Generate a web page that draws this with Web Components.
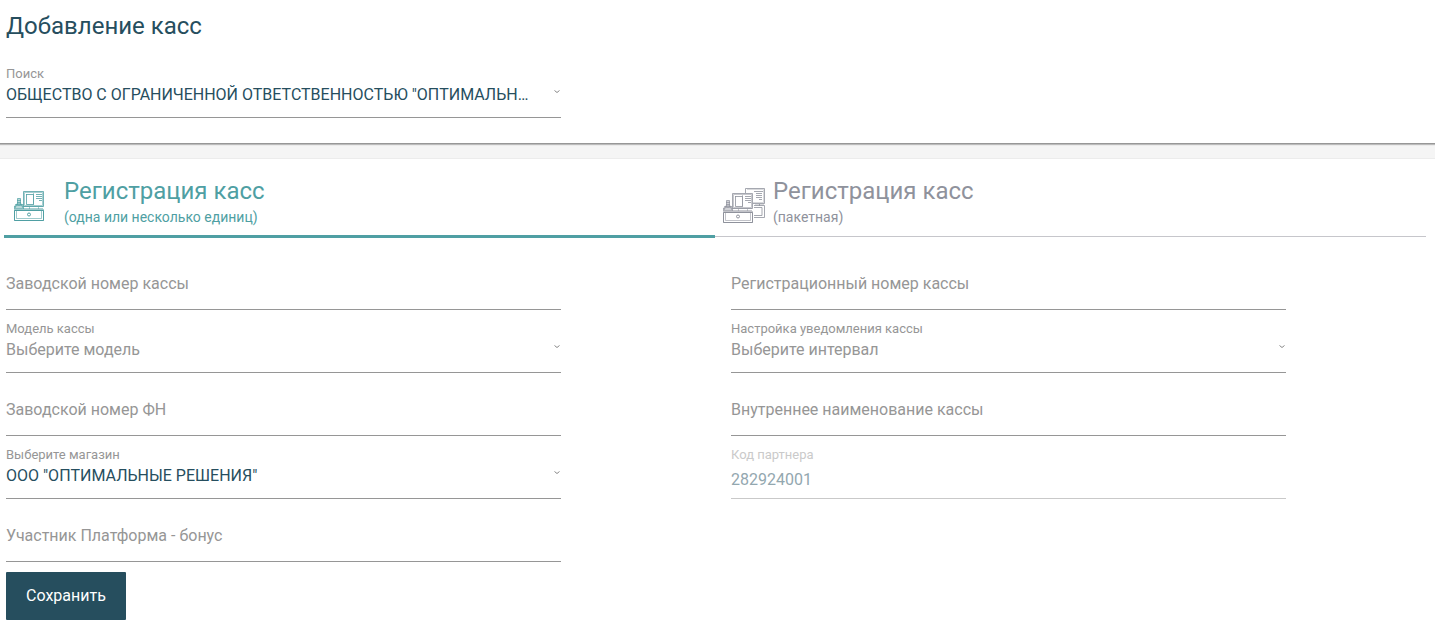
<!DOCTYPE html>
<html lang="ru">
<head>
<meta charset="utf-8">
<meta name="viewport" content="width=device-width, initial-scale=1">
<title>Добавление касс</title>
<style>
body { margin: 0; background: #fff; font-family: Roboto, sans-serif; --ink: #264e5e; --teal: #4f9fa3; --muted: #969696; --slate: #8f929c; }
</style>
</head>
<body>
<register-page></register-page>

<template id="register-page">
<style>
:host { display: block; color: var(--ink); }
header { position: relative; padding-top: 10px; padding-bottom: 25px; border-bottom: 1px solid #979797; box-shadow: 0 1px 1px #bbb; }
h1 { margin: 0 0 13px 6px; font-size: 24px; line-height: 32px; font-weight: 400; }
.columns { display: grid; grid-template-columns: 1fr 1fr; column-gap: 40px; padding: 0 19px 0 6px; align-items: start; }
.band { height: 14px; background: #f5f5f5; border-bottom: 1px solid #ececec; }
nav { display: grid; grid-template-columns: 1fr 1fr; padding: 0 9px 0 4px; margin-bottom: 9px; }
.actions { padding: 10px 6px; }
button { display: block; height: 48px; padding: 0 20px; border: 0; border-radius: 1px; background: var(--ink); color: #fff; font: 16px/24px Roboto, sans-serif; }
</style>
<header>
  <h1>Добавление касс</h1>
  <div class="columns">
    <select-field label="Поиск" value='ОБЩЕСТВО С ОГРАНИЧЕННОЙ ОТВЕТСТВЕННОСТЬЮ "ОПТИМАЛЬНЫЕ РЕШЕНИЯ"'></select-field>
  </div>
</header>
<div class="band"></div>
<main>
  <nav>
    <mode-tab active>
      <register-icon slot="icon"></register-icon>
      Регистрация касс
      <span slot="note">(одна или несколько единиц)</span>
    </mode-tab>
    <mode-tab>
      <register-icon slot="icon" batch></register-icon>
      Регистрация касс
      <span slot="note">(пакетная)</span>
    </mode-tab>
  </nav>
  <form>
    <div class="columns">
      <text-field label="Заводской номер кассы"></text-field>
      <text-field label="Регистрационный номер кассы"></text-field>
      <select-field label="Модель кассы" value="Выберите модель" unset></select-field>
      <select-field label="Настройка уведомления кассы" value="Выберите интервал" unset></select-field>
      <text-field label="Заводской номер ФН"></text-field>
      <text-field label="Внутреннее наименование кассы"></text-field>
      <select-field label="Выберите магазин" value='ООО "ОПТИМАЛЬНЫЕ РЕШЕНИЯ"'></select-field>
      <text-field label="Код партнера" value="282924001" disabled></text-field>
      <text-field label="Участник Платформа - бонус"></text-field>
    </div>
    <div class="actions"><button type="button">Сохранить</button></div>
  </form>
</main>
</template>

<template id="text-field">
<style>
:host { display: grid; grid-template-rows: 62px; width: 81%; border-bottom: 1px solid var(--muted); }
label, input { grid-area: 1 / 1; }
label { z-index: 1; align-self: start; margin-top: 25px; font-size: 16px; line-height: 24px; color: var(--muted); pointer-events: none; }
input { width: 100%; box-sizing: border-box; margin: 0; padding: 26px 0 0; border: 0; outline: 0; background: none; color: var(--ink); font: 16px/24px Roboto, sans-serif; }
:host([value]) label { margin-top: 11px; font-size: 13px; line-height: 16px; }
:host([disabled]) { border-color: #c9c9c9; }
:host([disabled]) label { color: #cacaca; }
:host([disabled]) input { color: #93a7af; }
</style>
<label for="control"></label>
<input id="control" type="text">
</template>

<template id="select-field">
<style>
:host { display: grid; grid-template: 16px 24px / 1fr; row-gap: 1px; width: 81%; padding: 11px 0 10px; border-bottom: 1px solid var(--muted); }
label { font-size: 13px; line-height: 16px; color: var(--muted); }
select { grid-area: 2 / 1; width: 100%; min-width: 0; margin: 0; padding: 0 32px 0 0; border: 0; outline: 0; appearance: none; background: none; color: var(--ink); font: 16px/24px Roboto, sans-serif; text-overflow: ellipsis; overflow: hidden; white-space: nowrap; }
svg { grid-area: 2 / 1; justify-self: end; margin-top: 6px; pointer-events: none; }
:host([unset]) select { color: var(--muted); }
</style>
<label for="control"></label>
<select id="control"></select>
<svg width="8" height="6" viewBox="0 0 8 6" fill="none" stroke="#888" stroke-width="1"><path d="M1.500 1.500l2.500 2 2.500-2"/></svg>
</template>

<template id="mode-tab">
<style>
:host { display: grid; border-bottom: 1px solid #c6c6cb; margin-bottom: 1px; color: var(--slate); }
:host([active]) { border-bottom: 3px solid var(--teal); margin-bottom: 0; color: var(--teal); }
button { display: grid; grid-template-columns: 50px 1fr; column-gap: 8px; align-items: start; padding: 16px 0 0; border: 0; background: none; color: inherit; font: 24px/32px Roboto, sans-serif; text-align: left; height: 77px; }
:host([active]) button { column-gap: 10px; height: 76px; }
.title { display: block; }
.note { display: block; font-size: 14px; line-height: 20px; }
.icon { display: grid; justify-items: end; padding-top: 13px; }
:host([active]) .icon { justify-items: center; }
</style>
<button type="button">
  <span class="icon"><slot name="icon"></slot></span>
  <span><span class="title"><slot></slot></span><span class="note"><slot name="note"></slot></span></span>
</button>
</template>

<template id="register-icon">
<style>
:host { display: block; }
svg { display: block; }
.batch { display: none; }
:host([batch]) .batch { display: block; }
:host([batch]) .single { display: none; }
</style>
<svg class="single" width="30" height="34" viewBox="0 0 30 34" fill="none" stroke="currentColor" aria-hidden="true">
  <g transform="translate(0 3)">
    <path stroke-opacity=".5" d="M10.5 1.5h18v13h-18zM10 15.500h19M15.500 16v2M24.500 16v2M1 17.500h28M1.500 13v4M8.500 13v4M1.500 13.500h8M19.500 2v12"/>
    <path d="M9.500 15.500V.5h20v15M9.500 15.500h20" stroke-opacity=".8"/>
    <path d="M12 3.500h7M12.500 3v10.500h7V3M22 3.500h6M22 5.500h6M22 7.500h6M25 9.500h3" stroke-opacity=".8"/>
    <path d="M.5 18.500v11h29v-11zM2.500 19.500h25v8h-25z" stroke-opacity=".55"/>
    <path d="M.5 19.500h29v10h-29z"/>
    <circle cx="15" cy="23.500" r="1.500"/>
    <path fill="currentColor" fill-opacity=".4" d="M3.500 7.500h3v7h-3zM3 9.500h4M3 11.500h4M.5 18v-3h2v-2h5v2h2v3" stroke-opacity=".7"/>
  </g>
</svg>
<svg class="batch" width="42" height="36" viewBox="0 0 42 36" fill="none" stroke="currentColor" aria-hidden="true">
  <path stroke-opacity=".8" d="M22.500 5V.5h19v15H30M31 3.500h9M33 5.500h6M33 7.500h6M33 9.500h6M36 11.500h3M31 17.500h10.500v12H31M31 19.500h8v8h-8M36.500 16v2"/>
  <path stroke-opacity=".35" d="M24 1.500h16.500v13H30M32 16.500h9"/>
  <g transform="translate(0 5)">
    <path stroke-opacity=".5" d="M10.500 1.500h18v13h-18zM10 15.500h19M15.500 16v2M24.500 16v2M1 17.500h28M1.500 13v4M8.500 13v4M1.500 13.500h8M19.500 2v12"/>
    <path d="M9.500 15.500V.5h20v15M9.500 15.500h20" stroke-opacity=".8"/>
    <path d="M12 3.500h7M12.500 3v10.500h7V3M22 3.500h6M22 5.500h6M22 7.500h6M25 9.500h3" stroke-opacity=".8"/>
    <path d="M.5 18.500v11h29v-11zM2.500 19.500h25v8h-25z" stroke-opacity=".55"/>
    <path d="M.5 19.500h29v10h-29z"/>
    <circle cx="15" cy="23.500" r="1.500"/>
    <path fill="currentColor" fill-opacity=".4" d="M3.500 7.500h3v7h-3zM3 9.500h4M3 11.500h4M.5 18v-3h2v-2h5v2h2v3" stroke-opacity=".7"/>
  </g>
</svg>
</template>

<script>
class TemplateElement extends HTMLElement {
  constructor() {
    super();
    this.attachShadow({ mode: 'open' }).append(document.getElementById(this.localName).content.cloneNode(true));
  }
}
class TextField extends TemplateElement {
  connectedCallback() {
    this.shadowRoot.querySelector('label').textContent = this.getAttribute('label');
    const input = this.shadowRoot.querySelector('input');
    input.value = this.getAttribute('value') || '';
    input.disabled = this.hasAttribute('disabled');
  }
}
class SelectField extends TemplateElement {
  connectedCallback() {
    this.shadowRoot.querySelector('label').textContent = this.getAttribute('label');
    this.shadowRoot.querySelector('select').replaceChildren(new Option(this.getAttribute('value')));
  }
}
customElements.define('register-icon', class extends TemplateElement {});
customElements.define('mode-tab', class extends TemplateElement {});
customElements.define('text-field', TextField);
customElements.define('select-field', SelectField);
customElements.define('register-page', class extends TemplateElement {});
</script>
</body>
</html>
